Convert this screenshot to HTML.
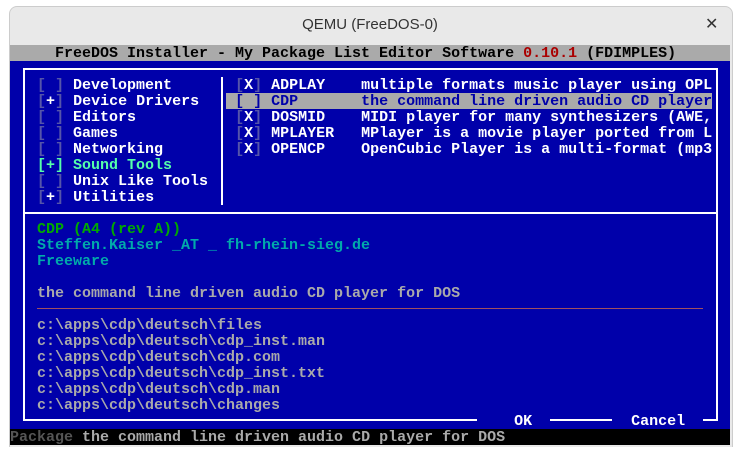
<!DOCTYPE html>
<html><head><meta charset="utf-8"><style>
html,body{margin:0;padding:0;background:#fff;width:740px;height:455px;overflow:hidden}
.win{position:absolute;left:9px;top:6px;width:722px;height:440px;border-radius:8px 8px 0 0;background:#e9e9e9;border:1px solid #ccc;border-bottom:none}
.title{position:absolute;left:0;top:0;width:740px;top:16px;text-align:center;font:15px "Liberation Sans",sans-serif;color:#333}
.close{position:absolute;left:705px;top:14px;font:16px "DejaVu Sans",sans-serif;color:#333}
.scr{position:absolute;left:10px;top:45px;width:720px;height:400px;background:#0000aa;overflow:hidden}
.r{position:absolute;left:0;height:16px;line-height:16px;white-space:pre;font:bold 15px "Liberation Mono",monospace;color:#fff}
.w{color:#fff}.g{color:#aaa}.d{color:#5555aa}.lg{color:#55ffaa}.gr{color:#00aa00}.cy{color:#00aaaa}.rd{color:#aa0000}.k{color:#000}.dg{color:#555}
.ln{position:absolute;background:#fff}
</style></head><body>
<div class="win"></div>
<div class="title">QEMU (FreeDOS-0)</div>
<div class="close">✕</div>
<div class="scr">
<div style="position:absolute;left:0;top:0;width:720px;height:16px;background:#aaa"></div>
<div class="r k" style="top:0">     FreeDOS Installer - My Package List Editor Software <span class="rd">0.10.1</span> (FDIMPLES)</div>
<div class="ln" style="left:13px;top:23px;width:694px;height:2px"></div>
<div class="ln" style="left:13px;top:23px;width:2px;height:352px"></div>
<div class="ln" style="left:706px;top:23px;width:2px;height:352px"></div>
<div class="ln" style="left:13px;top:374px;width:454px;height:2px"></div>
<div class="ln" style="left:540px;top:374px;width:62px;height:2px"></div>
<div class="ln" style="left:693px;top:374px;width:15px;height:2px"></div>
<div class="ln" style="left:211px;top:32px;width:2px;height:128px"></div>
<div class="ln" style="left:13px;top:167px;width:694px;height:2px"></div>
<div class="ln" style="left:27px;top:263px;width:666px;height:1px;background:#a05060"></div>
<div style="position:absolute;left:216px;top:48px;width:486px;height:16px;background:#aaa"></div>
<div class="r" style="top:32px">   <span class="d">[ ]</span> Development       <span class="d">[</span>X<span class="d">]</span> ADPLAY    multiple formats music player using OPL</div>
<div class="r" style="top:48px">   <span class="d">[</span>+<span class="d">]</span> Device Drivers    <span style="color:#0000aa">[ ] CDP       the command line driven audio CD player</span></div>
<div class="r" style="top:64px">   <span class="d">[ ]</span> Editors           <span class="d">[</span>X<span class="d">]</span> DOSMID    MIDI player for many synthesizers (AWE,</div>
<div class="r" style="top:80px">   <span class="d">[ ]</span> Games             <span class="d">[</span>X<span class="d">]</span> MPLAYER   MPlayer is a movie player ported from L</div>
<div class="r" style="top:96px">   <span class="d">[ ]</span> Networking        <span class="d">[</span>X<span class="d">]</span> OPENCP    OpenCubic Player is a multi-format (mp3</div>
<div class="r lg" style="top:112px">   [+] Sound Tools</div>
<div class="r" style="top:128px">   <span class="d">[ ]</span> Unix Like Tools</div>
<div class="r" style="top:144px">   <span class="d">[</span>+<span class="d">]</span> Utilities</div>
<div class="r gr" style="top:176px">   CDP (A4 (rev A))</div>
<div class="r cy" style="top:192px">   Steffen.Kaiser _AT _ fh-rhein-sieg.de</div>
<div class="r cy" style="top:208px">   Freeware</div>
<div class="r g" style="top:240px">   the command line driven audio CD player for DOS</div>
<div class="r g" style="top:272px">   c:\apps\cdp\deutsch\files</div>
<div class="r g" style="top:288px">   c:\apps\cdp\deutsch\cdp_inst.man</div>
<div class="r g" style="top:304px">   c:\apps\cdp\deutsch\cdp.com</div>
<div class="r g" style="top:320px">   c:\apps\cdp\deutsch\cdp_inst.txt</div>
<div class="r g" style="top:336px">   c:\apps\cdp\deutsch\cdp.man</div>
<div class="r g" style="top:352px">   c:\apps\cdp\deutsch\changes</div>
<div class="r" style="top:368px">                                                        OK           Cancel</div>
<div style="position:absolute;left:0;top:384px;width:720px;height:16px;background:#000"></div>
<div class="r g" style="top:384px"><span class="dg">Package</span> the command line driven audio CD player for DOS</div>
</div>
</body></html>
